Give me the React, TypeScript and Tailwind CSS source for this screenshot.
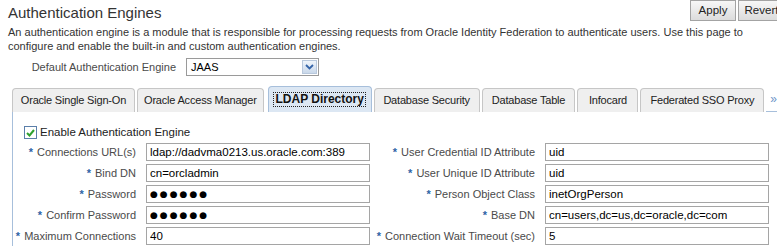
import React from "react";

const font = { fontFamily: '"Liberation Sans", Arial, sans-serif' };

const tabs = [
  { name: "Oracle Single Sign-On", w: "w-[123px]" },
  { name: "Oracle Access Manager", w: "w-[127px]" },
  { name: "LDAP Directory", w: "w-[104px]", active: true },
  { name: "Database Security", w: "w-[106px]" },
  { name: "Database Table", w: "w-[94px]" },
  { name: "Infocard", w: "w-[61px]" },
  { name: "Federated SSO Proxy", w: "w-[124px]" },
];

const rows: [string, string, string, string, boolean?][] = [
  ["Connections URL(s)", "ldap://dadvma0213.us.oracle.com:389", "User Credential ID Attribute", "uid"],
  ["Bind DN", "cn=orcladmin", "User Unique ID Attribute", "uid"],
  ["Password", "●●●●●●", "Person Object Class", "inetOrgPerson", true],
  ["Confirm Password", "●●●●●●", "Base DN", "cn=users,dc=us,dc=oracle,dc=com", true],
  ["Maximum Connections", "40", "Connection Wait Timeout (sec)", "5"],
];

function Label({ text }: { text: string }) {
  return (
    <div className="flex items-center justify-end pr-[10px] text-[#4a4a4a] whitespace-nowrap">
      <span className="text-[#2e64a6] font-bold mr-[4px] text-[11px]">*</span>
      {text}
    </div>
  );
}

function Field({ value, pw }: { value: string; pw?: boolean }) {
  return (
    <input
      readOnly
      type="text"
      value={value}
      className={`w-[224px] h-[18px] border border-[#a5a5a5] bg-white px-[3px] text-black outline-none ${pw ? "text-[9px] tracking-[2px]" : "text-[11.5px]"}`}
      style={pw ? { fontFamily: '"DejaVu Sans", sans-serif' } : font}
    />
  );
}

export default function App() {
  return (
    <div className="w-[777px] h-[246px] overflow-hidden bg-white text-[11px] text-[#333]" style={font}>
      <div className="flex justify-between items-start h-[21px]">
        <h1 className="pl-[8px] pt-[2px] text-[15px] text-[#333]">Authentication Engines</h1>
        <div className="flex gap-[2px] mr-[-8px]">
          <button className="h-[21px] w-[46px] border border-[#a3a3a3] bg-gradient-to-b from-[#f7f7f7] to-[#dcdcdc] text-[11.5px] text-[#222]">Apply</button>
          <button className="h-[21px] w-[47px] border border-[#a3a3a3] bg-gradient-to-b from-[#f7f7f7] to-[#dcdcdc] text-[11.5px] text-[#222]">Revert</button>
        </div>
      </div>
      <p className="pl-[8px] mt-[4px] leading-[14px] text-[11px]">
        An authentication engine is a module that is responsible for processing requests from Oracle Identity Federation to authenticate users. Use this page to<br />
        configure and enable the built-in and custom authentication engines.
      </p>
      <div className="flex items-center mt-[5px] h-[18px]">
        <div className="w-[176px] text-right text-[#4a4a4a]">Default Authentication Engine</div>
        <div className="ml-[10px] w-[133px] h-[18px] border border-[#9a9a9a] flex items-center justify-between pl-[4px] pr-[1px]">
          <span className="text-black text-[11px]">JAAS</span>
          <span className="w-[15px] h-[14px] border border-[#b8c8dc] bg-gradient-to-b from-[#f0f5fb] to-[#c9d8ea] flex items-center justify-center">
            <svg width="9" height="6" viewBox="0 0 9 6"><path d="M1 1l3.5 3.5L8 1" stroke="#3564a8" strokeWidth="1.8" fill="none" /></svg>
          </span>
        </div>
      </div>
      <div className="flex items-end mt-[10px] pl-[12px] h-[26px]">
        {tabs.map((t) =>
          t.active ? (
            <div key={t.name} className={`${t.w} h-[26px] mx-[2px] rounded-t-[4px] border border-b-0 border-[#a7bfdb] bg-[#dce7f3] flex items-center justify-center`}>
              <span className="font-bold text-[12px] text-[#111] border border-dotted border-[#222] px-[1px] leading-[13px]">{t.name}</span>
            </div>
          ) : (
            <div key={t.name} className={`${t.w} h-[24px] mr-[2px] rounded-t-[4px] border border-b-0 border-[#c6c6c6] bg-[#efefef] flex items-center justify-center text-[11px] tracking-[-0.2px] text-[#222]`}>
              {t.name}
            </div>
          )
        )}
        <div className="flex-1 h-[24px] border-b border-[#a7bfdb] pl-[4px] text-[#6d95c8] text-[12px] leading-[22px]">»</div>
      </div>
      <div className="ml-[12px] border-l border-[#a7bfdb] pt-[14px] h-[140px]">
        <div className="flex items-center pl-[11px] h-[13px]">
          <span className="w-[13px] h-[13px] border border-[#5b7faa] bg-white flex items-center justify-center">
            <svg width="9" height="8" viewBox="0 0 9 8"><path d="M1 4l2.5 2.5L8 1" stroke="#2fa12f" strokeWidth="2" fill="none" /></svg>
          </span>
          <span className="ml-[3px] text-[11.5px] text-[#222]">Enable Authentication Engine</span>
        </div>
        <div className="grid grid-cols-[133px_224px_175px_224px] gap-y-[3px] mt-[4px]">
          {rows.map(([l1, v1, l2, v2, pw]) => (
            <React.Fragment key={l1}>
              <Label text={l1} />
              <Field value={v1} pw={pw} />
              <Label text={l2} />
              <Field value={v2} />
            </React.Fragment>
          ))}
        </div>
      </div>
    </div>
  );
}
